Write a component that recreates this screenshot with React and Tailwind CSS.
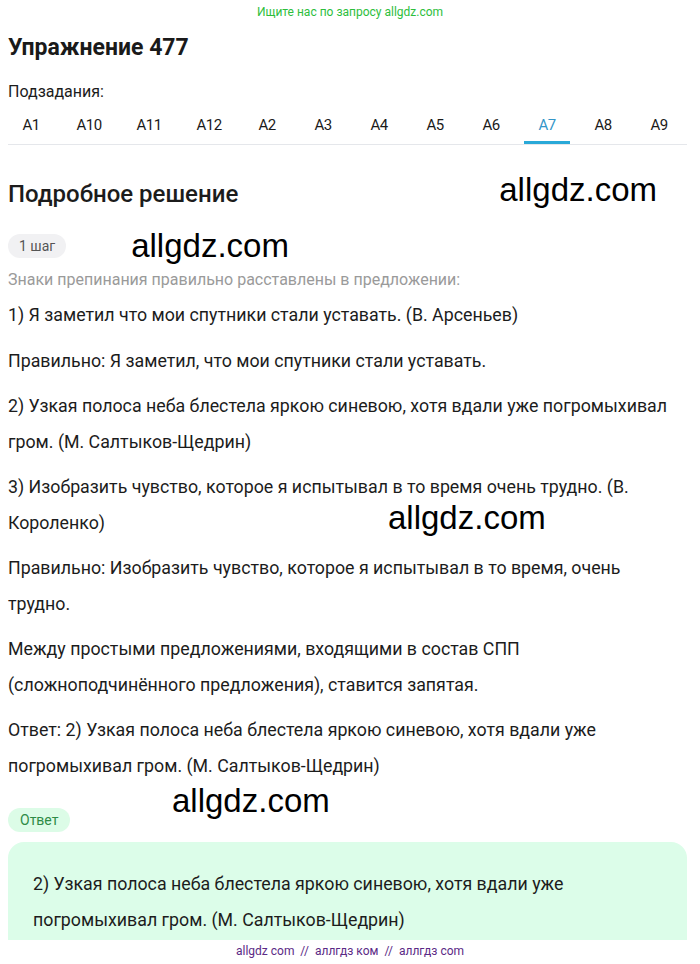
const font = { fontFamily: "Roboto, 'Noto Sans', sans-serif" };
const mark = { fontFamily: "'Liberation Sans', Arial, sans-serif" };

const tabs = ["A1", "A10", "A11", "A12", "A2", "A3", "A4", "A5", "A6", "A7", "A8", "A9"];

const paragraphs = [
  "1) Я заметил что мои спутники стали уставать. (В. Арсеньев)",
  "Правильно: Я заметил, что мои спутники стали уставать.",
  "2) Узкая полоса неба блестела яркою синевою, хотя вдали уже погромыхивал гром. (М. Салтыков-Щедрин)",
  "3) Изобразить чувство, которое я испытывал в то время очень трудно. (В. Короленко)",
  "Правильно: Изобразить чувство, которое я испытывал в то время, очень трудно.",
  "Между простыми предложениями, входящими в состав СПП (сложноподчинённого предложения), ставится запятая.",
  "Ответ: 2) Узкая полоса неба блестела яркою синевою, хотя вдали уже погромыхивал гром. (М. Салтыков-Щедрин)",
];

function Watermark({ className }) {
  return (
    <span className={`text-[33px] leading-none text-black ${className}`} style={mark}>
      allgdz.com
    </span>
  );
}

export default function App() {
  return (
    <div className="relative h-[964px] overflow-hidden bg-white text-[#1c1c1c]" style={font}>
      <div className="pt-[4px] text-center text-[12px] leading-[16px] text-[#2dbe3c]">
        Ищите нас по запросу allgdz.com
      </div>

      <div className="pl-2 pr-[13px]">
        <h1 className="mt-[14px] text-[23px] font-bold leading-[28px] text-[#1a1a1a]">Упражнение 477</h1>
        <div className="mt-[20px] text-[16px] leading-[20px]">Подзадания:</div>

        <div className="mt-[4px] flex gap-[10px] border-b border-[#e5e7eb]">
          {tabs.map((t) => (
            <div
              key={t}
              className={`flex h-[38px] items-center justify-center text-[15px] tracking-[-0.5px] ${
                t.length > 2 ? "w-[50px]" : "w-[46px]"
              } ${t === "A7" ? "border-b-[3px] border-[#29a9d8] pt-[3px] text-[#3396c8]" : "text-[#1a1a1a]"}`}
            >
              {t}
            </div>
          ))}
        </div>

        <div className="mt-[35px] flex items-center justify-between pr-[30px]">
          <h2 className="text-[24px] font-medium leading-[28px]">Подробное решение</h2>
          <Watermark className="-mt-[10px]" />
        </div>

        <div className="mt-[21px] flex items-center gap-[65px]">
          <span className="rounded-full bg-[#f1f1f3] px-[11px] py-[4px] text-[14px] leading-[16px] text-[#555]">
            1 шаг
          </span>
          <Watermark />
        </div>

        <p className="mt-[7px] text-[16px] leading-[22px] text-[#9a9a9a]">
          Знаки препинания правильно расставлены в предложении:
        </p>

        <div className="mt-[6px] flex flex-col gap-[10px] text-[17.8px] leading-[35.5px]">
          {paragraphs.map((p, i) => (
            <p key={i} className="relative">
              {p}
              {i === 3 && <Watermark className="absolute left-[380px] top-[32px]" />}
            </p>
          ))}
        </div>

        <div className="relative mt-[25px]">
          <Watermark className="absolute left-[164px] -top-[24px]" />
          <span className="inline-block rounded-full bg-[#dcfce7] px-[12px] py-[4px] text-[14px] leading-[16px] text-[#2e8b46]">
            Ответ
          </span>
        </div>

        <div className="mt-[10px] rounded-t-[16px] bg-[#dcfde9] px-[25px] pt-[24px] pb-[20px] text-[17.8px] leading-[35.5px]">
          2) Узкая полоса неба блестела яркою синевою, хотя вдали уже погромыхивал гром. (М. Салтыков-Щедрин)
        </div>
      </div>

      <div className="absolute bottom-0 left-0 right-0 bg-white pb-[5px] pt-[3px] text-center text-[12px] leading-[16px] text-[#5b2a86]">
        allgdz com &nbsp;//&nbsp; аллгдз ком &nbsp;//&nbsp; аллгдз com
      </div>
    </div>
  );
}
